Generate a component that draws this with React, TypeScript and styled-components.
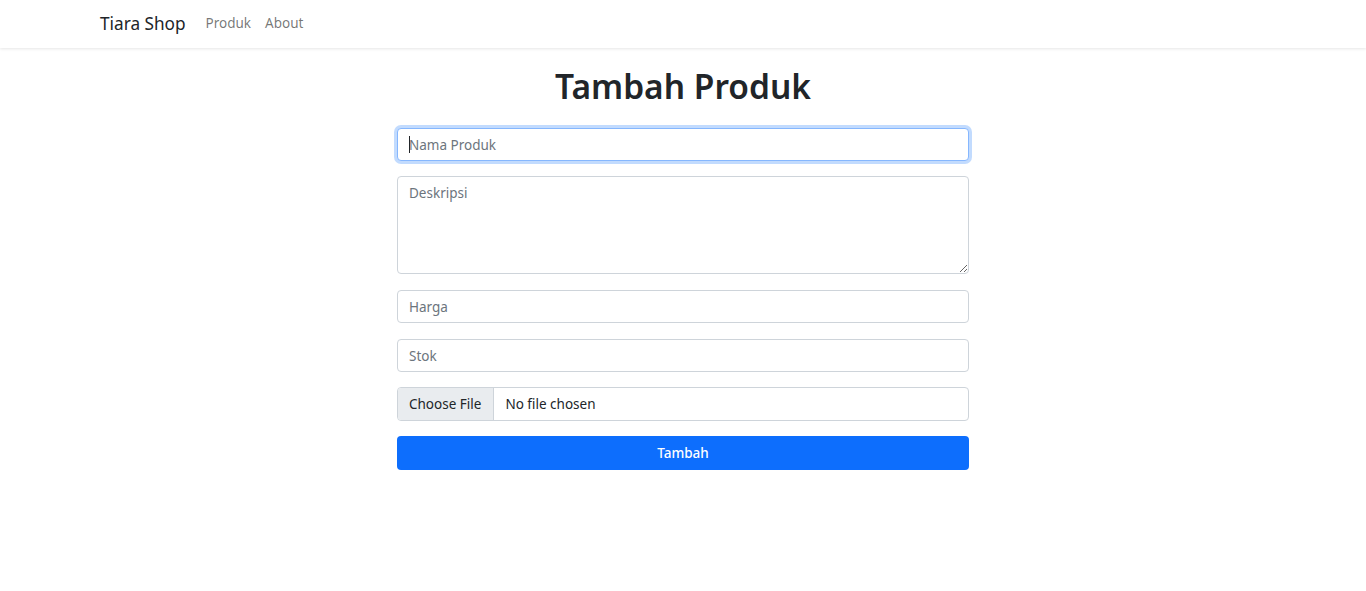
import React from "react";
import styled, { createGlobalStyle } from "styled-components";

const Global = createGlobalStyle`
  html, body { margin: 0; padding: 0; background: #fff; }
  body { font-family: "Noto Sans", "Open Sans", sans-serif; color: #212529; }
  * { box-sizing: border-box; }
`;

const Navbar = styled.nav`
  height: 48px;
  display: flex;
  align-items: center;
  padding-left: 100px;
  padding-bottom: 2px;
  background: #fff;
  box-shadow: 0 1px 3px rgba(0, 0, 0, 0.1);
`;

const Brand = styled.a`
  font-size: 17.2px;
  color: #212529;
  text-decoration: none;
  margin-right: 20px;
`;

const NavLink = styled.a`
  font-size: 13.5px;
  color: rgba(0, 0, 0, 0.55);
  text-decoration: none;
  margin-right: 14px;
`;

const Main = styled.main`
  width: 572px;
  margin: 0 auto;
  padding-top: 15px;
`;

const Title = styled.h1`
  margin: 0 0 19px;
  text-align: center;
  font-size: 33.5px;
  font-weight: 600;
  line-height: 46px;
  color: #212529;
`;

const Field = styled.div<{ $gap: number }>`
  position: relative;
  margin-bottom: ${(p) => p.$gap}px;
`;

const Input = styled.input<{ $focus?: boolean }>`
  display: block;
  width: 100%;
  height: 33px;
  padding: 0 11px;
  font-family: inherit;
  font-size: 13.5px;
  color: #212529;
  background: #fff;
  border: 1px solid ${(p) => (p.$focus ? "#86b7fe" : "#ced4da")};
  border-radius: 4px;
  outline: none;
  box-shadow: ${(p) => (p.$focus ? "0 0 0 3px rgba(13,110,253,0.25)" : "none")};
  &::placeholder { color: #6c757d; }
`;

const Caret = styled.span`
  position: absolute;
  left: 12px;
  top: 8px;
  width: 1px;
  height: 17px;
  background: #212529;
`;

const TextArea = styled.textarea`
  display: block;
  width: 100%;
  height: 98px;
  padding: 6px 11px;
  font-family: inherit;
  font-size: 13.5px;
  line-height: 21px;
  color: #212529;
  border: 1px solid #ced4da;
  border-radius: 4px;
  outline: none;
  resize: vertical;
  &::placeholder { color: #6c757d; }
`;

const FileBox = styled.div`
  display: flex;
  height: 34px;
  border: 1px solid #ced4da;
  border-radius: 4px;
  overflow: hidden;
  font-size: 13.5px;
`;

const FileButton = styled.span`
  display: flex;
  align-items: center;
  padding: 0 12px 0 11px;
  background: #e9ecef;
  border-right: 1px solid #ced4da;
  color: #212529;
`;

const FileName = styled.span`
  display: flex;
  align-items: center;
  padding-left: 11px;
  color: #212529;
`;

const Submit = styled.button`
  display: block;
  width: 100%;
  height: 34px;
  border: none;
  border-radius: 4px;
  background: #0d6efd;
  color: #fff;
  font-family: inherit;
  font-size: 13.5px;
  font-weight: 500;
  cursor: pointer;
`;

export default function App() {
  return (
    <>
      <Global />
      <Navbar>
        <Brand href="#">Tiara Shop</Brand>
        <NavLink href="#">Produk</NavLink>
        <NavLink href="#">About</NavLink>
      </Navbar>
      <Main>
        <Title>Tambah Produk</Title>
        <Field $gap={15}>
          <Input $focus placeholder="Nama Produk" />
          <Caret />
        </Field>
        <Field $gap={16}>
          <TextArea placeholder="Deskripsi" />
        </Field>
        <Field $gap={16}>
          <Input placeholder="Harga" />
        </Field>
        <Field $gap={15}>
          <Input placeholder="Stok" />
        </Field>
        <Field $gap={15}>
          <FileBox>
            <FileButton>Choose File</FileButton>
            <FileName>No file chosen</FileName>
          </FileBox>
        </Field>
        <Submit>Tambah</Submit>
      </Main>
    </>
  );
}
